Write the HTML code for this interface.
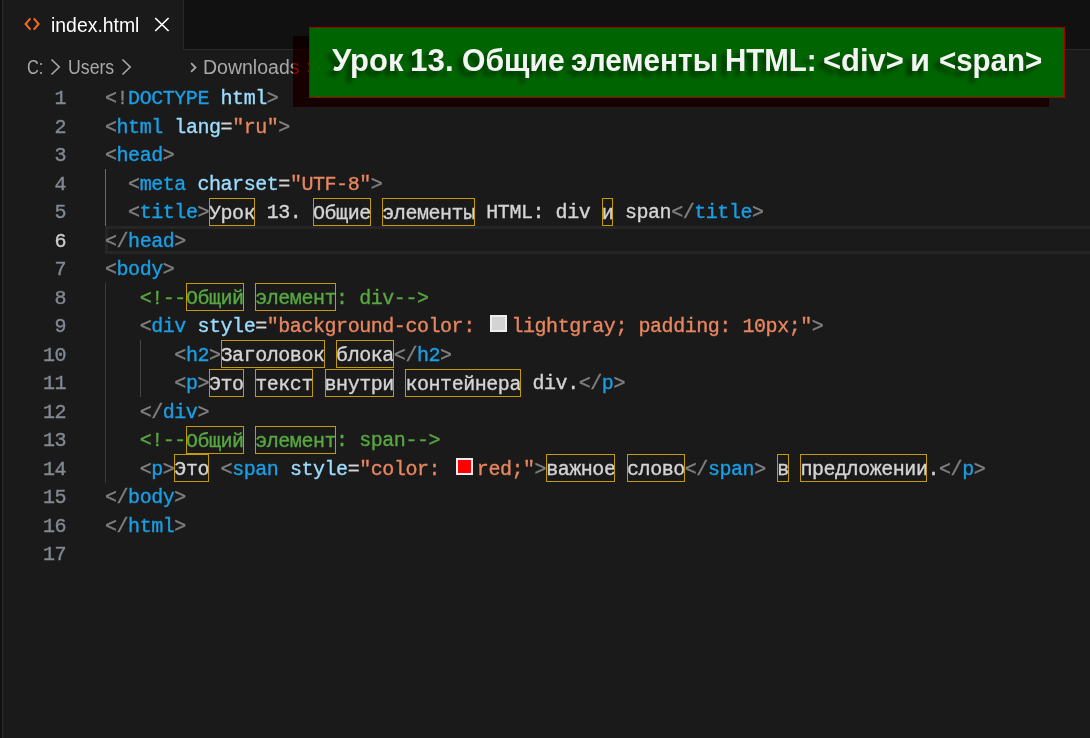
<!DOCTYPE html>
<html lang="ru">
<head>
<meta charset="UTF-8">
<title>index.html</title>
<style>
*{box-sizing:border-box;margin:0;padding:0}
html,body{width:1090px;height:738px;overflow:hidden;background:#1a1a1a}
body{position:relative;font-family:"Liberation Sans",sans-serif;color:#ccc}
.abs{position:absolute}
#strip{left:0;top:0;width:2px;height:738px;background:#111}
#stripb{left:2px;top:0;width:1px;height:738px;background:#2a2a2a}
#tabbar{left:3px;top:0;width:1087px;height:50px;background:#111;border-bottom:1px solid #2a2a2a}
#tab{left:3px;top:0;width:181px;height:50px;background:#1a1a1a;border-right:1px solid #2a2a2a}
.ui{font-size:20px;line-height:24px;white-space:pre;color:#a8a8a8;transform:scaleX(.91);transform-origin:0 0}
#tabname{left:51px;top:13px;color:#fff;font-size:20px;line-height:24px;white-space:pre;transform:scaleX(.97);transform-origin:0 0}
#code{left:0;top:83.5px;width:1090px}
.ln{position:absolute;left:0;height:28.5px;width:1090px;white-space:pre;font-family:"Liberation Mono",monospace;font-size:20px;letter-spacing:-0.45px;line-height:28.5px;color:#d4d4d4;-webkit-text-stroke:0.35px}
.ln .n{position:absolute;left:0;top:1.5px;width:66px;text-align:right;color:#818993}
.ln .c{position:absolute;left:105px;top:1.5px}
.g{color:#808080}.t{color:#1a9fe6}.a{color:#9cdcfe}.s{color:#e8865f}.m{color:#58a840}
.u{outline:1px solid #c39b06;outline-offset:-1px;padding:3.5px 0 1.5px 0}
.cb{display:inline-block;width:16.8px;height:16.8px;margin:0 4.2px 0 4.2px;border:2px solid #eee;vertical-align:0px}
.guide{position:absolute;width:1px}
#shadow{left:293px;top:36px;width:756px;height:71px;background:#e00000;mix-blend-mode:multiply}
#banner{left:309px;top:27px;width:756px;height:71px;background:#006400;border:1px solid #a00000}
#btext{left:0;top:43px;white-space:pre;font-weight:bold;font-size:29.7px;line-height:36px;color:#f4f4f4;text-shadow:-5px 5px 4px rgba(0,0,0,.45)}
#btext span{position:absolute;top:0;transform-origin:0 27.8px}
</style>
</head>
<body>
<div class="abs" id="strip"></div><div class="abs" id="stripb"></div>
<div class="abs" id="tabbar"></div>
<div class="abs" id="tab"></div>
<svg class="abs" style="left:24px;top:17px" width="17" height="14" viewBox="0 0 17 14"><path d="M6.4 1.4 L1.6 7 L6.4 12.6 M9.8 1.4 L14.6 7 L9.8 12.6" fill="none" stroke="#f4681e" stroke-width="2.1"/></svg>
<div class="abs" id="tabname">index.html</div>
<svg class="abs" style="left:154px;top:17px" width="16" height="15" viewBox="0 0 16 15"><path d="M1.2 1 L14.6 14 M14.6 1 L1.2 14" fill="none" stroke="#fff" stroke-width="1.7"/></svg>

<div class="abs ui" id="bc1" style="left:26.5px;top:54.7px;transform:scaleX(.82)">C:</div>
<svg class="abs" style="left:50px;top:58px" width="12" height="18" viewBox="0 0 12 18"><path d="M1.5 1.5 L9.2 9 L1.5 16.5" fill="none" stroke="#a8a8a8" stroke-width="1.6"/></svg>
<div class="abs ui" id="bc2" style="left:67.8px;top:54.7px;transform:scaleX(.885)">Users</div>
<svg class="abs" style="left:121px;top:58px" width="12" height="18" viewBox="0 0 12 18"><path d="M1.5 1.5 L9.2 9 L1.5 16.5" fill="none" stroke="#a8a8a8" stroke-width="1.6"/></svg>
<svg class="abs" style="left:190px;top:61.5px" width="8" height="11" viewBox="0 0 8 11"><path d="M1.1 1.2 L5.5 5.5 L1.1 9.8" fill="none" stroke="#a8a8a8" stroke-width="1.8"/></svg>
<div class="abs ui" id="bc3" style="left:203px;top:54.7px;transform:scaleX(.975)">Downloads</div>
<svg class="abs" style="left:307px;top:61.5px" width="8" height="11" viewBox="0 0 8 11"><path d="M1.1 1.2 L5.5 5.5 L1.1 9.8" fill="none" stroke="#a8a8a8" stroke-width="1.8"/></svg>

<div class="abs" id="code">
<div class="abs" style="left:105px;top:142.5px;width:990px;height:28px;border:3px solid #262626"></div>
<div class="guide" style="left:105px;top:85.5px;height:57px;background:#6a6a6a"></div>
<div class="guide" style="left:105px;top:199.5px;height:199.5px;background:#3c3c3c"></div>
<div class="guide" style="left:140px;top:256.5px;height:57px;background:#454545"></div>
<div class="ln" style="top:0"><span class="n">1</span><span class="c"><span class="g">&lt;!</span><span class="t">DOCTYPE</span><span class="a"> html</span><span class="g">&gt;</span></span></div>
<div class="ln" style="top:28.5px"><span class="n">2</span><span class="c"><span class="g">&lt;</span><span class="t">html</span> <span class="a">lang</span>=<span class="s">"ru"</span><span class="g">&gt;</span></span></div>
<div class="ln" style="top:57px"><span class="n">3</span><span class="c"><span class="g">&lt;</span><span class="t">head</span><span class="g">&gt;</span></span></div>
<div class="ln" style="top:85.5px"><span class="n">4</span><span class="c">  <span class="g">&lt;</span><span class="t">meta</span> <span class="a">charset</span>=<span class="s">"UTF-8"</span><span class="g">&gt;</span></span></div>
<div class="ln" style="top:114px"><span class="n">5</span><span class="c">  <span class="g">&lt;</span><span class="t">title</span><span class="g">&gt;</span><span class="u">Урок</span> 13. <span class="u">Общие</span> <span class="u">элементы</span> HTML: div <span class="u">и</span> span<span class="g">&lt;/</span><span class="t">title</span><span class="g">&gt;</span></span></div>
<div class="ln" style="top:142.5px"><span class="n" style="color:#ccc">6</span><span class="c"><span class="g">&lt;/</span><span class="t">head</span><span class="g">&gt;</span></span></div>
<div class="ln" style="top:171px"><span class="n">7</span><span class="c"><span class="g">&lt;</span><span class="t">body</span><span class="g">&gt;</span></span></div>
<div class="ln" style="top:199.5px"><span class="n">8</span><span class="c m">   &lt;!--<span class="u">Общий</span> <span class="u">элемент</span>: div--&gt;</span></div>
<div class="ln" style="top:228px"><span class="n">9</span><span class="c">   <span class="g">&lt;</span><span class="t">div</span> <span class="a">style</span>=<span class="s">"background-color: <span class="cb" style="background:#d3d3d3"></span>lightgray; padding: 10px;"</span><span class="g">&gt;</span></span></div>
<div class="ln" style="top:256.5px"><span class="n">10</span><span class="c">      <span class="g">&lt;</span><span class="t">h2</span><span class="g">&gt;</span><span class="u">Заголовок</span> <span class="u">блока</span><span class="g">&lt;/</span><span class="t">h2</span><span class="g">&gt;</span></span></div>
<div class="ln" style="top:285px"><span class="n">11</span><span class="c">      <span class="g">&lt;</span><span class="t">p</span><span class="g">&gt;</span><span class="u">Это</span> <span class="u">текст</span> <span class="u">внутри</span> <span class="u">контейнера</span> div.<span class="g">&lt;/</span><span class="t">p</span><span class="g">&gt;</span></span></div>
<div class="ln" style="top:313.5px"><span class="n">12</span><span class="c">   <span class="g">&lt;/</span><span class="t">div</span><span class="g">&gt;</span></span></div>
<div class="ln" style="top:342px"><span class="n">13</span><span class="c m">   &lt;!--<span class="u">Общий</span> <span class="u">элемент</span>: span--&gt;</span></div>
<div class="ln" style="top:370.5px"><span class="n">14</span><span class="c">   <span class="g">&lt;</span><span class="t">p</span><span class="g">&gt;</span><span class="u">Это</span> <span class="g">&lt;</span><span class="t">span</span> <span class="a">style</span>=<span class="s">"color: <span class="cb" style="background:#f00"></span>red;"</span><span class="g">&gt;</span><span class="u">важное</span> <span class="u">слово</span><span class="g">&lt;/</span><span class="t">span</span><span class="g">&gt;</span> <span class="u">в</span> <span class="u">предложении</span>.<span class="g">&lt;/</span><span class="t">p</span><span class="g">&gt;</span></span></div>
<div class="ln" style="top:399px"><span class="n">15</span><span class="c"><span class="g">&lt;/</span><span class="t">body</span><span class="g">&gt;</span></span></div>
<div class="ln" style="top:427.5px"><span class="n">16</span><span class="c"><span class="g">&lt;/</span><span class="t">html</span><span class="g">&gt;</span></span></div>
<div class="ln" style="top:456px"><span class="n">17</span><span class="c"></span></div>
</div>

<div class="abs" id="shadow"></div>
<div class="abs" id="banner"></div>
<div class="abs" id="btext"><span style="left:331.6px;transform:scale(1.044,1.065)">Урок </span><span style="left:410.4px;transform:scale(1.057,1.065)">13. </span><span style="left:461.6px;transform:scale(1.014,1.065)">Общие </span><span style="left:570.9px;transform:scale(1.004,1.065)">элементы </span><span style="left:724.5px;transform:scale(0.993,1.065)">HTML: </span><span style="left:823.3px;transform:scale(1.043,1.065)">&lt;div&gt; </span><span style="left:910.2px;transform:scale(1.1,1.065)">и </span><span style="left:938.9px;transform:scale(0.993,1.065)">&lt;span&gt;</span></div>
</body>
</html>
